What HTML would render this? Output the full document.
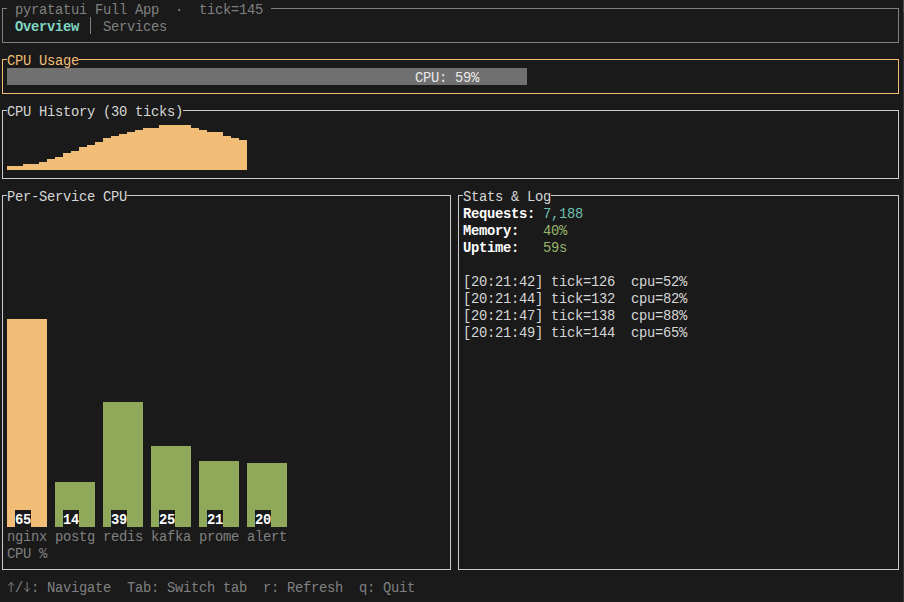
<!DOCTYPE html>
<html><head><meta charset="utf-8"><style>
html,body{margin:0;padding:0;}
body{width:904px;height:602px;background:#1a1a1a;position:relative;overflow:hidden;font-family:"Liberation Mono",monospace;font-size:13.8px;}
div,span.t{position:absolute;}
span.t{white-space:pre;letter-spacing:-0.280px;line-height:17px;height:17px;}
</style></head><body>
<div style="left:2px;top:8px;width:5px;height:1px;background:#808080"></div>
<div style="left:271px;top:8px;width:628px;height:1px;background:#808080"></div>
<span class="t" style="left:7px;top:2.0px;color:#808080"> pyratatui Full App  ·  tick=145 </span>
<div style="left:2px;top:42px;width:897px;height:1px;background:#808080"></div>
<div style="left:2px;top:8px;width:1px;height:35px;background:#808080"></div>
<div style="left:898px;top:8px;width:1px;height:35px;background:#808080"></div>
<span class="t" style="left:15px;top:19.0px;color:#7fd6c3;font-weight:bold">Overview</span>
<div style="left:90px;top:17px;width:1px;height:17px;background:#808080"></div>
<span class="t" style="left:103px;top:19.0px;color:#808080">Services</span>
<div style="left:2px;top:59px;width:5px;height:1px;background:#f2bd76"></div>
<div style="left:79px;top:59px;width:820px;height:1px;background:#f2bd76"></div>
<span class="t" style="left:7px;top:53.0px;color:#f2bd76">CPU Usage</span>
<div style="left:2px;top:93px;width:897px;height:1px;background:#f2bd76"></div>
<div style="left:2px;top:59px;width:1px;height:35px;background:#f2bd76"></div>
<div style="left:898px;top:59px;width:1px;height:35px;background:#f2bd76"></div>
<div style="left:7px;top:68px;width:520px;height:17px;background:#707070"></div>
<span class="t" style="left:415px;top:70.0px;color:#e8e8e8">CPU: 59%</span>
<div style="left:2px;top:110px;width:5px;height:1px;background:#cccccc"></div>
<div style="left:183px;top:110px;width:716px;height:1px;background:#cccccc"></div>
<span class="t" style="left:7px;top:104.0px;color:#d6d6d6">CPU History (30 ticks)</span>
<div style="left:2px;top:178px;width:897px;height:1px;background:#cccccc"></div>
<div style="left:2px;top:110px;width:1px;height:69px;background:#cccccc"></div>
<div style="left:898px;top:110px;width:1px;height:69px;background:#cccccc"></div>
<div style="left:7px;top:166px;width:8px;height:4px;background:#f2bd76"></div>
<div style="left:15px;top:166px;width:8px;height:4px;background:#f2bd76"></div>
<div style="left:23px;top:164px;width:8px;height:6px;background:#f2bd76"></div>
<div style="left:31px;top:164px;width:8px;height:6px;background:#f2bd76"></div>
<div style="left:39px;top:162px;width:8px;height:8px;background:#f2bd76"></div>
<div style="left:47px;top:159px;width:8px;height:11px;background:#f2bd76"></div>
<div style="left:55px;top:157px;width:8px;height:13px;background:#f2bd76"></div>
<div style="left:63px;top:153px;width:8px;height:17px;background:#f2bd76"></div>
<div style="left:71px;top:151px;width:8px;height:19px;background:#f2bd76"></div>
<div style="left:79px;top:147px;width:8px;height:23px;background:#f2bd76"></div>
<div style="left:87px;top:145px;width:8px;height:25px;background:#f2bd76"></div>
<div style="left:95px;top:142px;width:8px;height:28px;background:#f2bd76"></div>
<div style="left:103px;top:138px;width:8px;height:32px;background:#f2bd76"></div>
<div style="left:111px;top:136px;width:8px;height:34px;background:#f2bd76"></div>
<div style="left:119px;top:134px;width:8px;height:36px;background:#f2bd76"></div>
<div style="left:127px;top:132px;width:8px;height:38px;background:#f2bd76"></div>
<div style="left:135px;top:130px;width:8px;height:40px;background:#f2bd76"></div>
<div style="left:143px;top:128px;width:8px;height:42px;background:#f2bd76"></div>
<div style="left:151px;top:128px;width:8px;height:42px;background:#f2bd76"></div>
<div style="left:159px;top:125px;width:8px;height:45px;background:#f2bd76"></div>
<div style="left:167px;top:125px;width:8px;height:45px;background:#f2bd76"></div>
<div style="left:175px;top:125px;width:8px;height:45px;background:#f2bd76"></div>
<div style="left:183px;top:125px;width:8px;height:45px;background:#f2bd76"></div>
<div style="left:191px;top:128px;width:8px;height:42px;background:#f2bd76"></div>
<div style="left:199px;top:130px;width:8px;height:40px;background:#f2bd76"></div>
<div style="left:207px;top:132px;width:8px;height:38px;background:#f2bd76"></div>
<div style="left:215px;top:132px;width:8px;height:38px;background:#f2bd76"></div>
<div style="left:223px;top:136px;width:8px;height:34px;background:#f2bd76"></div>
<div style="left:231px;top:138px;width:8px;height:32px;background:#f2bd76"></div>
<div style="left:239px;top:140px;width:8px;height:30px;background:#f2bd76"></div>
<div style="left:2px;top:195px;width:5px;height:1px;background:#cccccc"></div>
<div style="left:127px;top:195px;width:324px;height:1px;background:#cccccc"></div>
<span class="t" style="left:7px;top:189.0px;color:#d6d6d6">Per-Service CPU</span>
<div style="left:2px;top:569px;width:449px;height:1px;background:#cccccc"></div>
<div style="left:2px;top:195px;width:1px;height:375px;background:#cccccc"></div>
<div style="left:450px;top:195px;width:1px;height:375px;background:#cccccc"></div>
<div style="left:7px;top:319px;width:40px;height:208px;background:#f2bd76"></div>
<div style="left:15px;top:510px;width:16px;height:17px;background:#1a1a1a"></div>
<span class="t" style="left:15px;top:512.0px;color:#ffffff;font-weight:bold">65</span>
<span class="t" style="left:7px;top:529.0px;color:#808080">nginx</span>
<div style="left:55px;top:482px;width:40px;height:45px;background:#8fa85a"></div>
<div style="left:63px;top:510px;width:16px;height:17px;background:#1a1a1a"></div>
<span class="t" style="left:63px;top:512.0px;color:#ffffff;font-weight:bold">14</span>
<span class="t" style="left:55px;top:529.0px;color:#808080">postg</span>
<div style="left:103px;top:402px;width:40px;height:125px;background:#8fa85a"></div>
<div style="left:111px;top:510px;width:16px;height:17px;background:#1a1a1a"></div>
<span class="t" style="left:111px;top:512.0px;color:#ffffff;font-weight:bold">39</span>
<span class="t" style="left:103px;top:529.0px;color:#808080">redis</span>
<div style="left:151px;top:446px;width:40px;height:81px;background:#8fa85a"></div>
<div style="left:159px;top:510px;width:16px;height:17px;background:#1a1a1a"></div>
<span class="t" style="left:159px;top:512.0px;color:#ffffff;font-weight:bold">25</span>
<span class="t" style="left:151px;top:529.0px;color:#808080">kafka</span>
<div style="left:199px;top:461px;width:40px;height:66px;background:#8fa85a"></div>
<div style="left:207px;top:510px;width:16px;height:17px;background:#1a1a1a"></div>
<span class="t" style="left:207px;top:512.0px;color:#ffffff;font-weight:bold">21</span>
<span class="t" style="left:199px;top:529.0px;color:#808080">prome</span>
<div style="left:247px;top:463px;width:40px;height:64px;background:#8fa85a"></div>
<div style="left:255px;top:510px;width:16px;height:17px;background:#1a1a1a"></div>
<span class="t" style="left:255px;top:512.0px;color:#ffffff;font-weight:bold">20</span>
<span class="t" style="left:247px;top:529.0px;color:#808080">alert</span>
<span class="t" style="left:7px;top:546.0px;color:#808080">CPU %</span>
<div style="left:458px;top:195px;width:5px;height:1px;background:#cccccc"></div>
<div style="left:551px;top:195px;width:348px;height:1px;background:#cccccc"></div>
<span class="t" style="left:463px;top:189.0px;color:#d6d6d6">Stats &amp; Log</span>
<div style="left:458px;top:569px;width:441px;height:1px;background:#cccccc"></div>
<div style="left:458px;top:195px;width:1px;height:375px;background:#cccccc"></div>
<div style="left:898px;top:195px;width:1px;height:375px;background:#cccccc"></div>
<span class="t" style="left:463px;top:206.0px;color:#ffffff;font-weight:bold">Requests:</span>
<span class="t" style="left:543px;top:206.0px;color:#6cbfae">7,188</span>
<span class="t" style="left:463px;top:223.0px;color:#ffffff;font-weight:bold">Memory:</span>
<span class="t" style="left:543px;top:223.0px;color:#98b46a">40%</span>
<span class="t" style="left:463px;top:240.0px;color:#ffffff;font-weight:bold">Uptime:</span>
<span class="t" style="left:543px;top:240.0px;color:#98b46a">59s</span>
<span class="t" style="left:463px;top:274.0px;color:#d6d6d6">[20:21:42] tick=126  cpu=52%</span>
<span class="t" style="left:463px;top:291.0px;color:#d6d6d6">[20:21:44] tick=132  cpu=82%</span>
<span class="t" style="left:463px;top:308.0px;color:#d6d6d6">[20:21:47] tick=138  cpu=88%</span>
<span class="t" style="left:463px;top:325.0px;color:#d6d6d6">[20:21:49] tick=144  cpu=65%</span>
<div style="left:903px;top:0px;width:1px;height:13px;background:#464852"></div>
<div style="left:903px;top:13px;width:1px;height:589px;background:#34353a"></div>
<svg style="position:absolute;left:0;top:570px" width="40" height="30"><g stroke="#808080" stroke-width="1" fill="none"><path d="M11.1 12.3V22"/><path d="M8.3 15.6L11.1 12.4L13.9 15.6"/><path d="M27.1 12V21.7"/><path d="M24.3 18.2L27.1 21.4L29.9 18.2"/></g></svg>
<span class="t" style="left:7px;top:580.0px;color:#808080"> / : Navigate  Tab: Switch tab  r: Refresh  q: Quit</span>
</body></html>
